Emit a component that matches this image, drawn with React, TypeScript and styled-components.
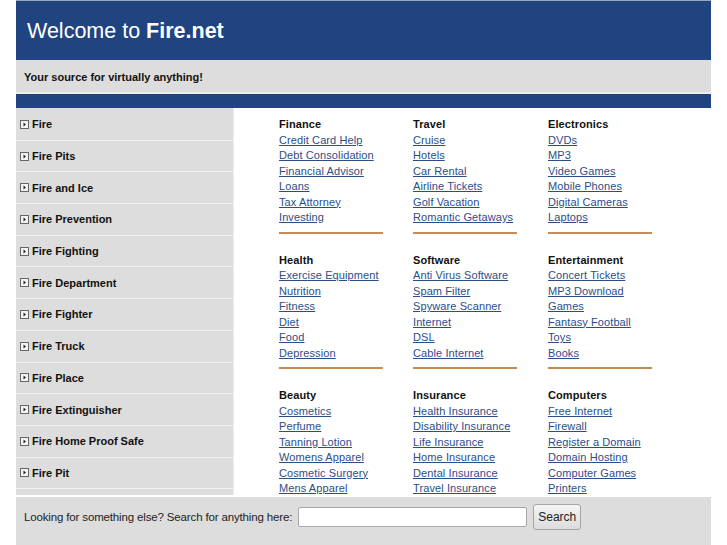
import React from "react";
import styled, { createGlobalStyle } from "styled-components";

const Global = createGlobalStyle`
  html, body { margin: 0; padding: 0; background: #fff; }
  body { font-family: "Liberation Sans", Arial, sans-serif; }
`;

const Page = styled.div`
  width: 695px;
  margin-left: 16px;
`;

const Header = styled.header`
  height: 60px;
  background: #1f4480;
  border-top: 1px solid #9aa6b8;
  box-sizing: border-box;
  display: flex;
  align-items: center;
  padding: 2px 0 0 11px;
`;

const Title = styled.h1`
  margin: 0;
  font-size: 21.5px;
  font-weight: normal;
  color: #fff;
  b { font-weight: bold; }
`;

const Tagline = styled.div`
  height: 34px;
  background: #dddddd;
  display: flex;
  align-items: center;
  padding: 1px 0 0 8px;
  box-sizing: border-box;
  font-size: 11px;
  font-weight: bold;
  color: #111;
  border-bottom: 2px solid #eeeeee;
`;

const BlueBar = styled.div`
  height: 14px;
  background: #1f4480;
`;

const Main = styled.div`
  display: flex;
  height: 389px;
  overflow: hidden;
`;

const Sidebar = styled.nav`
  width: 217px;
  background: #dddddd;
  border-right: 1px solid #ececec;
  align-self: flex-start;
  padding: 1px 0 6px;
`;

const NavItem = styled.div`
  height: 30.7px;
  border-bottom: 1px solid #f1f1f1;
  display: flex;
  align-items: center;
  padding-left: 4px;
  gap: 3px;
  font-size: 11px;
  font-weight: bold;
  color: #111;
`;

const Content = styled.div`
  flex: 1;
  padding: 9px 0 0 45px;
  display: grid;
  grid-template-columns: 134px 135px 135px;
  grid-auto-rows: 135.5px;
  align-content: start;
`;

const Block = styled.div`
  display: flex;
  flex-direction: column;
  align-items: flex-start;
  font-size: 11px;
  line-height: 15.5px;
  letter-spacing: 0.1px;
`;

const Heading = styled.div`
  font-weight: bold;
  color: #111;
`;

const Link = styled.a`
  color: #2b4e86;
  text-decoration: underline;
`;

const Rule = styled.div`
  width: 104px;
  height: 2px;
  margin-top: 6px;
  background: #c98b55;
`;

const Footer = styled.footer`
  height: 60px;
  background: #dddddd;
  display: flex;
  align-items: flex-start;
  padding: 7px 0 0 8px;
  box-sizing: border-box;
  font-size: 11.5px;
  color: #222;
`;

const FooterLabel = styled.span`
  line-height: 26px;
  letter-spacing: -0.15px;
`;

const SearchInput = styled.input`
  width: 229px;
  height: 20px;
  box-sizing: border-box;
  margin: 3px 0 0 6px;
  border: 1px solid #a8a8a8;
  border-radius: 2px;
  background: #fff;
`;

const SearchButton = styled.button`
  margin-left: 6px;
  width: 48px;
  height: 26px;
  font-family: "Liberation Sans", Arial, sans-serif;
  font-size: 12px;
  color: #222;
  border: 1px solid #a5a5a5;
  border-radius: 3px;
  background: linear-gradient(#f4f4f4, #dcdcdc);
  padding: 0;
`;

const Icon = () => (
  <svg width="9" height="9" viewBox="0 0 9 9">
    <rect x="0.5" y="0.5" width="8" height="8" fill="#f4f4f4" stroke="#666" />
    <path d="M3.5 2.5 L6 4.5 L3.5 6.5 Z" fill="#222" />
  </svg>
);

const navItems = [
  "Fire", "Fire Pits", "Fire and Ice", "Fire Prevention", "Fire Fighting",
  "Fire Department", "Fire Fighter", "Fire Truck", "Fire Place",
  "Fire Extinguisher", "Fire Home Proof Safe", "Fire Pit",
];

const blocks: { title: string; links: string[] }[] = [
  { title: "Finance", links: ["Credit Card Help", "Debt Consolidation", "Financial Advisor", "Loans", "Tax Attorney", "Investing"] },
  { title: "Travel", links: ["Cruise", "Hotels", "Car Rental", "Airline Tickets", "Golf Vacation", "Romantic Getaways"] },
  { title: "Electronics", links: ["DVDs", "MP3", "Video Games", "Mobile Phones", "Digital Cameras", "Laptops"] },
  { title: "Health", links: ["Exercise Equipment", "Nutrition", "Fitness", "Diet", "Food", "Depression"] },
  { title: "Software", links: ["Anti Virus Software", "Spam Filter", "Spyware Scanner", "Internet", "DSL", "Cable Internet"] },
  { title: "Entertainment", links: ["Concert Tickets", "MP3 Download", "Games", "Fantasy Football", "Toys", "Books"] },
  { title: "Beauty", links: ["Cosmetics", "Perfume", "Tanning Lotion", "Womens Apparel", "Cosmetic Surgery", "Mens Apparel"] },
  { title: "Insurance", links: ["Health Insurance", "Disability Insurance", "Life Insurance", "Home Insurance", "Dental Insurance", "Travel Insurance"] },
  { title: "Computers", links: ["Free Internet", "Firewall", "Register a Domain", "Domain Hosting", "Computer Games", "Printers"] },
];

export default function App() {
  return (
    <Page>
      <Global />
      <Header>
        <Title>Welcome to <b>Fire.net</b></Title>
      </Header>
      <Tagline>Your source for virtually anything!</Tagline>
      <BlueBar />
      <Main>
        <Sidebar>
          {navItems.map((n) => (
            <NavItem key={n}>
              <Icon />
              {n}
            </NavItem>
          ))}
        </Sidebar>
        <Content>
          {blocks.map((b) => (
            <Block key={b.title}>
              <Heading>{b.title}</Heading>
              {b.links.map((l) => (
                <Link key={l} href="#">{l}</Link>
              ))}
              <Rule />
            </Block>
          ))}
        </Content>
      </Main>
      <Footer>
        <FooterLabel>Looking for something else? Search for anything here:</FooterLabel>
        <SearchInput type="text" />
        <SearchButton>Search</SearchButton>
      </Footer>
    </Page>
  );
}
